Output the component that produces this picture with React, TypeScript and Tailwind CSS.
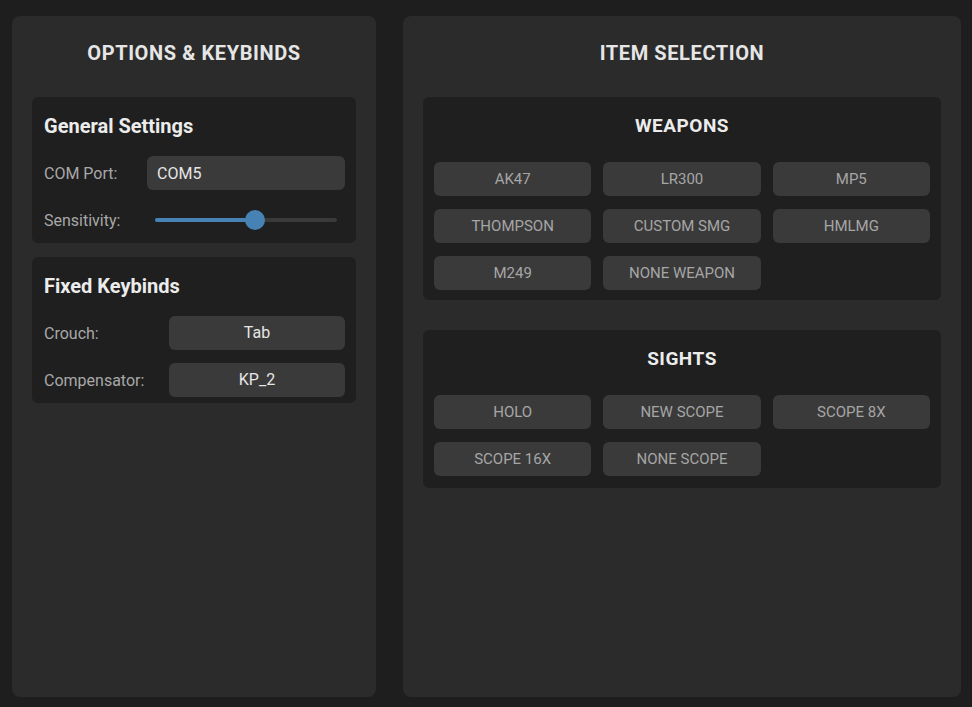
import { useState } from 'react';

const weapons = ['AK47', 'LR300', 'MP5', 'THOMPSON', 'CUSTOM SMG', 'HMLMG', 'M249', 'NONE WEAPON'];
const sights = ['HOLO', 'NEW SCOPE', 'SCOPE 8X', 'SCOPE 16X', 'NONE SCOPE'];

function ItemGroup({ title, items, pad }: { title: string; items: string[]; pad: string }) {
  return (
    <div className={`bg-[#1f1f1f] rounded-md px-[11px] ${pad}`}>
      <h3 className="text-[19px] font-bold text-[#ececec] text-center tracking-[0.5px] leading-[28px] pt-[15px] mb-[22px]">
        {title}
      </h3>
      <div className="grid grid-cols-3 gap-x-3 gap-y-[13px]">
        {items.map((it) => (
          <button
            key={it}
            className="h-[34px] bg-[#3a3a3a] rounded-md text-[15px] text-[#a6a6a6] uppercase"
          >
            {it}
          </button>
        ))}
      </div>
    </div>
  );
}

export default function App() {
  const [sens, setSens] = useState(55);

  return (
    <div
      className="h-screen bg-[#1e1e1e] flex gap-[27px] pt-4 pb-[10px] pl-3 pr-[11px]"
      style={{ fontFamily: 'Roboto, "Liberation Sans", sans-serif' }}
    >
      {/* Options panel */}
      <div className="w-[364px] shrink-0 bg-[#2b2b2b] rounded-lg px-5 pt-5">
        <h2 className="text-[20px] font-bold text-[#e6e6e6] text-center tracking-[0.6px] leading-[24px] mt-[5px] mb-[32px]">
          OPTIONS &amp; KEYBINDS
        </h2>

        <div className="bg-[#1f1f1f] rounded-md pl-3 pr-[11px] pt-[15px] pb-[6px]">
          <h3 className="text-[20px] font-bold text-[#ececec] leading-[28px] mb-4">General Settings</h3>
          <div className="flex items-center h-[34px] mb-[13px]">
            <span className="w-[103px] shrink-0 text-[16px] text-[#a8a8a8] pt-px">COM Port:</span>
            <input
              className="flex-1 min-w-0 h-[34px] bg-[#3a3a3a] rounded-md px-[10px] text-[16px] text-[#e6e6e6] outline-none"
              defaultValue="COM5"
            />
          </div>
          <div className="flex items-center h-[34px]">
            <span className="w-[111px] shrink-0 text-[16px] text-[#a8a8a8] pt-px">Sensitivity:</span>
            <div className="relative w-[182px] h-5 flex items-center">
              <div className="w-full h-[4px] rounded-full bg-[#3a3a3a]">
                <div className="h-full rounded-full bg-[#4682b4]" style={{ width: `${sens}%` }} />
              </div>
              <div
                className="absolute w-5 h-5 rounded-full bg-[#4682b4] -translate-x-1/2"
                style={{ left: `${sens}%` }}
              />
              <input
                type="range"
                min={0}
                max={100}
                value={sens}
                onChange={(e) => setSens(Number(e.target.value))}
                className="absolute inset-0 w-full opacity-0 cursor-pointer"
              />
            </div>
          </div>
        </div>

        <div className="bg-[#1f1f1f] rounded-md pl-3 pr-[11px] pt-[15px] pb-[6px] mt-[14px]">
          <h3 className="text-[20px] font-bold text-[#ececec] leading-[28px] mb-4">Fixed Keybinds</h3>
          <div className="flex items-center h-[34px] mb-[13px]">
            <span className="w-[125px] shrink-0 text-[16px] text-[#a8a8a8] pt-px">Crouch:</span>
            <button className="flex-1 h-[34px] bg-[#3a3a3a] rounded-md text-[16px] text-[#e6e6e6]">Tab</button>
          </div>
          <div className="flex items-center h-[34px]">
            <span className="w-[125px] shrink-0 text-[16px] text-[#a8a8a8] pt-px">Compensator:</span>
            <button className="flex-1 h-[34px] bg-[#3a3a3a] rounded-md text-[16px] text-[#e6e6e6]">KP_2</button>
          </div>
        </div>
      </div>

      {/* Item selection panel */}
      <div className="flex-1 bg-[#2b2b2b] rounded-lg px-5 pt-5">
        <h2 className="text-[20px] font-bold text-[#e6e6e6] text-center tracking-[0.6px] leading-[24px] mt-[5px] mb-[32px]">
          ITEM SELECTION
        </h2>
        <ItemGroup title="WEAPONS" items={weapons} pad="pb-[10px]" />
        <div className="h-[30px]" />
        <ItemGroup title="SIGHTS" items={sights} pad="pb-[12px]" />
      </div>
    </div>
  );
}
